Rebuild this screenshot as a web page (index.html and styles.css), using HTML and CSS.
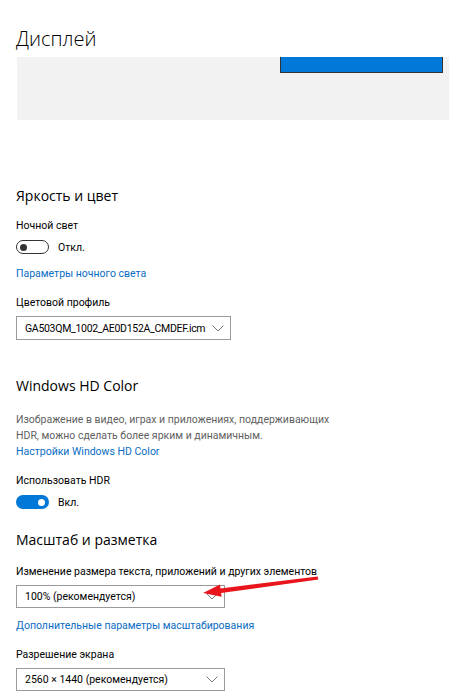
FILE: index.html
```html
<!DOCTYPE html>
<html lang="ru">
<head>
    <meta charset="UTF-8">
    <meta name="viewport" content="width=device-width, initial-scale=1.0">
    <title>Дисплей</title>
    <link rel="stylesheet" href="styles.css">
</head>
<body>
    <div class="page">
        <h1 class="page-title">Дисплей</h1>

        <!-- monitor layout preview -->
        <div class="preview">
            <div class="monitor"></div>
        </div>

        <h2 class="section-title first">Яркость и цвет</h2>

        <div class="label">Ночной свет</div>
        <div class="toggle-row">
            <span class="toggle off"><span class="knob"></span></span>
            <span class="toggle-text">Откл.</span>
        </div>
        <a class="link" href="#">Параметры ночного света</a>

        <div class="label">Цветовой профиль</div>
        <div class="select wide">
            <span class="select-value">GA503QM_1002_AE0D152A_CMDEF.icm</span>
            <svg class="chevron" width="12" height="7" viewBox="0 0 12 7"><path d="M0.5 0.5 L6 6 L11.5 0.5" fill="none" stroke="#7a7a7a" stroke-width="1"/></svg>
        </div>

        <h2 class="section-title">Windows HD Color</h2>
        <p class="description">Изображение в видео, играх и приложениях, поддерживающих HDR, можно сделать более ярким и динамичным.</p>
        <a class="link tight" href="#">Настройки Windows HD Color</a>

        <div class="label">Использовать HDR</div>
        <div class="toggle-row">
            <span class="toggle on"><span class="knob"></span></span>
            <span class="toggle-text">Вкл.</span>
        </div>

        <h2 class="section-title scale">Масштаб и разметка</h2>

        <div class="label">Изменение размера текста, приложений и других элементов</div>
        <div class="select">
            <span class="select-value">100% (рекомендуется)</span>
            <svg class="chevron" width="12" height="7" viewBox="0 0 12 7"><path d="M0.5 0.5 L6 6 L11.5 0.5" fill="none" stroke="#7a7a7a" stroke-width="1"/></svg>
        </div>
        <a class="link after-select" href="#">Дополнительные параметры масштабирования</a>

        <div class="label">Разрешение экрана</div>
        <div class="select">
            <span class="select-value">2560 × 1440 (рекомендуется)</span>
            <svg class="chevron" width="12" height="7" viewBox="0 0 12 7"><path d="M0.5 0.5 L6 6 L11.5 0.5" fill="none" stroke="#7a7a7a" stroke-width="1"/></svg>
        </div>

        <!-- red annotation arrow pointing at the scale dropdown -->
        <svg class="annotation" width="449" height="700" viewBox="0 0 449 700">
            <polygon points="317.6,576.4 220.5,588.4 220,584.6 203,593 221.6,596.8 221.1,592.9 318.4,579.6" fill="#e8161c"/>
        </svg>
    </div>
</body>
</html>
```

FILE: styles.css
```css
body {
    margin: 0;
    background-color: #fff;
    color: #000;
    font-family: 'Roboto', 'Noto Sans', sans-serif;
    font-size: 10.5px;
}

.page {
    position: relative;
    width: 449px;
    height: 700px;
    overflow: hidden;
    padding-left: 16px;
    box-sizing: border-box;
}

.page-title {
    margin: 25px 0 0 0;
    font-family: 'Open Sans', 'Noto Sans', sans-serif;
    font-size: 20px;
    font-weight: 300;
    line-height: 28px;
}

.preview {
    margin-top: 4px;
    margin-left: 1px;
    margin-right: -10px;
    height: 63px;
    background-color: #f2f2f2;
    display: flex;
    justify-content: flex-end;
}

.monitor {
    width: 161px;
    height: 15px;
    margin-right: 16px;
    background-color: #0078d7;
    border: 1px solid #333;
    border-top: none;
}

.section-title {
    margin: 36px 0 0 0;
    font-family: 'Open Sans', 'Noto Sans', sans-serif;
    font-size: 14px;
    font-weight: 400;
    line-height: 20px;
}

.section-title.first {
    margin-top: 66px;
}

.section-title.scale {
    margin-top: 20px;
}

.label {
    margin-top: 13px;
    line-height: 16px;
}

.section-title + .label {
    margin-top: 12px;
}

.section-title.scale + .label {
    margin-top: 14px;
}

.toggle-row {
    display: flex;
    align-items: center;
    gap: 9px;
    margin-top: 5px;
    height: 16px;
}

.toggle {
    width: 33px;
    height: 14px;
    box-sizing: border-box;
    border-radius: 7px;
    display: flex;
    align-items: center;
    padding: 0 3px;
}

.toggle .knob {
    width: 7px;
    height: 7px;
    border-radius: 50%;
}

.toggle.off {
    border: 1.5px solid #333;
}

.toggle.off .knob {
    background-color: #333;
}

.toggle.on {
    background-color: #0078d7;
    justify-content: flex-end;
    padding-right: 4px;
}

.toggle.on .knob {
    background-color: #fff;
}

.link {
    display: block;
    margin-top: 11px;
    line-height: 16px;
    color: #0a6cc4;
    text-decoration: none;
}

.link.tight {
    margin-top: 0;
}

.link.after-select {
    margin-top: 10px;
}

.select {
    margin-top: 5px;
    width: 209px;
    height: 23px;
    box-sizing: border-box;
    border: 1.5px solid #9a9a9a;
    display: flex;
    align-items: center;
    justify-content: space-between;
    padding: 0 6px 0 8px;
}

.select.wide {
    width: 215px;
    height: 24px;
}

.select.wide .select-value {
    letter-spacing: -0.3px;
}

.chevron {
    display: block;
}

.description {
    margin: 16px 0 0 0;
    width: 320px;
    color: #5f5f5f;
    line-height: 16px;
}

.annotation {
    position: absolute;
    left: 0;
    top: 0;
    pointer-events: none;
}
```
